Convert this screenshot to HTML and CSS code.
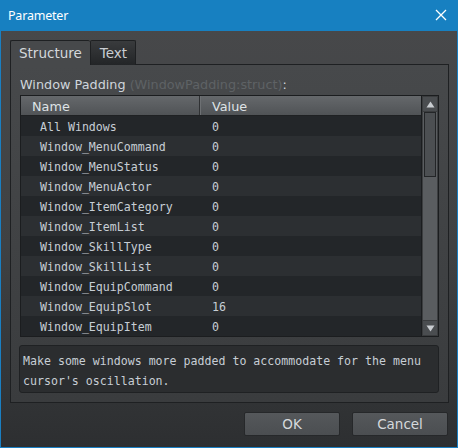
FILE: index.html
```html
<!DOCTYPE html>
<html>
<head>
<meta charset="utf-8">
<link rel="stylesheet" href="styles.css">
</head>
<body>
<div class="window">
  <div class="titlebar">
    <span class="title">Parameter</span>
    <svg class="close" width="12" height="12" viewBox="0 0 12 12"><path d="M1 1 L11 11 M11 1 L1 11" stroke="#fff" stroke-width="1.3" fill="none"/></svg>
  </div>
  <div class="content">
    <div class="tabs">
      <div class="tab active">Structure</div>
      <div class="tab">Text</div>
    </div>
    <div class="panel">
      <div class="label">Window Padding <span class="type">(WindowPadding:struct)</span>:</div>
      <div class="table">
        <div class="grid">
          <div class="head">
            <div class="hname">Name</div>
            <div class="hvalue">Value</div>
          </div>
          <div class="row"><div class="cname">All Windows</div><div class="cval">0</div></div>
          <div class="row"><div class="cname">Window_MenuCommand</div><div class="cval">0</div></div>
          <div class="row"><div class="cname">Window_MenuStatus</div><div class="cval">0</div></div>
          <div class="row"><div class="cname">Window_MenuActor</div><div class="cval">0</div></div>
          <div class="row"><div class="cname">Window_ItemCategory</div><div class="cval">0</div></div>
          <div class="row"><div class="cname">Window_ItemList</div><div class="cval">0</div></div>
          <div class="row"><div class="cname">Window_SkillType</div><div class="cval">0</div></div>
          <div class="row"><div class="cname">Window_SkillList</div><div class="cval">0</div></div>
          <div class="row"><div class="cname">Window_EquipCommand</div><div class="cval">0</div></div>
          <div class="row"><div class="cname">Window_EquipSlot</div><div class="cval">16</div></div>
          <div class="row"><div class="cname">Window_EquipItem</div><div class="cval">0</div></div>
        </div>
        <div class="scrollbar">
          <div class="sbtn"><svg width="9" height="7" viewBox="0 0 9 7"><path d="M4.5 0.5 L8.5 6.5 L0.5 6.5 Z" fill="#c9cdd1"/></svg></div>
          <div class="track"><div class="thumb"></div></div>
          <div class="sbtn"><svg width="9" height="7" viewBox="0 0 9 7"><path d="M0.5 0.5 L8.5 0.5 L4.5 6.5 Z" fill="#c9cdd1"/></svg></div>
        </div>
      </div>
      <div class="desc">Make some windows more padded to accommodate for the menu cursor's oscillation.</div>
    </div>
    <div class="buttons">
      <div class="btn">OK</div>
      <div class="btn">Cancel</div>
    </div>
  </div>
</div>
</body>
</html>
```
FILE: styles.css
```css
html, body {
  margin: 0;
  padding: 0;
}
body {
  width: 458px;
  height: 448px;
  overflow: hidden;
  background: #2d2f31;
}
.window {
  box-sizing: border-box;
  width: 458px;
  height: 448px;
  border: 1px solid #1a7fc2;
  border-top: none;
  display: flex;
  flex-direction: column;
  background: linear-gradient(to bottom, #48494b 0%, #3f4143 55%, #2d2f31 100%);
}
.titlebar {
  height: 31px;
  flex: none;
  background: #1780c1;
  display: flex;
  align-items: center;
  justify-content: space-between;
  padding: 0 11px 0 8px;
  margin: 0 -1px;
}
.title {
  font-family: "Noto Sans", sans-serif;
  font-size: 12.5px;
  color: #ffffff;
  letter-spacing: -0.2px;
}
.close {
  display: block;
  margin-top: -1px;
}
.content {
  flex: 1;
  display: flex;
  flex-direction: column;
  padding: 9px 8px 0 9px;
}
.tabs {
  display: flex;
  align-items: flex-end;
  height: 25px;
  position: relative;
  z-index: 1;
  margin-bottom: -1px;
}
.tab {
  font-family: "DejaVu Sans", sans-serif;
  font-size: 13.5px;
  color: #c9cdd2;
  height: 25px;
  box-sizing: border-box;
  padding: 0 8px 0 9px;
  line-height: 24px;
  border: 1px solid #1e2022;
  border-bottom: none;
  border-radius: 2px 2px 0 0;
  background: linear-gradient(to bottom, #393b3d, #232527);
}
.tab.active {
  height: 25px;
  padding: 0 8px 0 8px;
  line-height: 24px;
  color: #d4d8dc;
  background: #47494b;
  border-right: none;
}
.panel {
  box-sizing: border-box;
  width: 439px;
  height: 339px;
  border: 1px solid #1e2022;
  background: linear-gradient(to bottom, #47494b, #3a3c3e);
  padding: 9px 9px 0 9px;
  display: flex;
  flex-direction: column;
}
.label {
  font-family: "DejaVu Sans", sans-serif;
  font-size: 12.8px;
  line-height: 21px;
  color: #cfd6dc;
  height: 21px;
}
.label .type {
  color: #5e6265;
}
.table {
  display: flex;
  border: 1px solid #1b1d1f;
  height: 242px;
  box-sizing: border-box;
  width: 419px;
}
.grid {
  flex: 1;
  background: #25282b;
  overflow: hidden;
}
.head {
  display: flex;
  height: 20px;
  box-sizing: border-box;
  border-bottom: 1px solid #1f2123;
  background: linear-gradient(to bottom, #65686b, #505356);
  font-family: "DejaVu Sans", sans-serif;
  font-size: 12.8px;
  color: #dfe3e6;
  line-height: 21px;
  overflow: hidden;
}
.hname {
  width: 179px;
  box-sizing: border-box;
  padding-left: 11px;
  border-right: 1px solid #2f3133;
}
.hvalue {
  flex: 1;
  padding-left: 11px;
  border-left: 1px solid #6d7073;
}
.row {
  display: flex;
  height: 20px;
  line-height: 23px;
  overflow: hidden;
  font-family: "DejaVu Sans Mono", monospace;
  font-size: 11.6px;
  color: #c7ced5;
  background: #232629;
}
.row:nth-child(odd) {
  background: #2c2f32;
}
.cname {
  width: 179px;
  box-sizing: border-box;
  padding-left: 19px;
}
.cval {
  flex: 1;
  padding-left: 12px;
}
.scrollbar {
  width: 16px;
  flex: none;
  border-left: 1px solid #1b1d1f;
  display: flex;
  flex-direction: column;
  background: #585b5e;
}
.sbtn {
  height: 16px;
  flex: none;
  background: #4a4d50;
  display: flex;
  align-items: center;
  justify-content: center;
  box-sizing: border-box;
  border: 1px solid #3a3c3e;
}
.track {
  flex: 1;
  background: #5a5d60;
  border-left: 1px solid #3c3e40;
  border-right: 1px solid #3c3e40;
}
.thumb {
  height: 65px;
  box-sizing: border-box;
  background: #4c4f52;
  border: 1px solid #232527;
  margin: 0 1px;
}
.desc {
  margin-top: 8px;
  margin-left: -1px;
  width: 420px;
  box-sizing: border-box;
  height: 48px;
  border: 1px solid #1f2123;
  border-radius: 3px;
  background: #2b2d2f;
  padding: 5px 3px 0 3px;
  font-family: "DejaVu Sans Mono", monospace;
  font-size: 11.6px;
  line-height: 20px;
  color: #c7ced5;
}
.buttons {
  display: flex;
  justify-content: flex-end;
  gap: 12px;
  margin-top: 9px;
  padding-right: 1px;
}
.btn {
  width: 96px;
  height: 24px;
  box-sizing: border-box;
  border: 1px solid #26282a;
  border-radius: 2px;
  background: linear-gradient(to bottom, #55585b, #4b4e51);
  font-family: "DejaVu Sans", sans-serif;
  font-size: 13.5px;
  color: #d6d9dc;
  line-height: 22px;
  text-align: center;
}
```
